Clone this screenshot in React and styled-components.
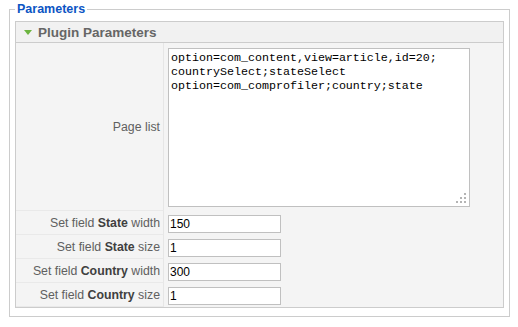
import React from "react";
import styled, { createGlobalStyle } from "styled-components";

const GlobalStyle = createGlobalStyle`
  body {
    margin: 0;
    background: #fff;
    font-family: "Liberation Sans", Arial, sans-serif;
  }
`;

const params = [
  { pre: "Set field ", key: "State", post: " width", value: "150" },
  { pre: "Set field ", key: "State", post: " size", value: "1" },
  { pre: "Set field ", key: "Country", post: " width", value: "300" },
  { pre: "Set field ", key: "Country", post: " size", value: "1" },
];

const pageList =
  "option=com_content,view=article,id=20;\ncountrySelect;stateSelect\noption=com_comprofiler;country;state";

const Page = styled.div`
  padding: 2px 8px 0 9px;
`;

const FieldSet = styled.fieldset`
  box-sizing: border-box;
  width: 501px;
  margin: 0;
  padding: 4px 5px 8px 5px;
  border: 1px solid #cccccc;
`;

const Legend = styled.legend`
  padding: 0 2px;
  font-size: 12.5px;
  line-height: 15px;
  font-weight: bold;
  color: #0b55c4;
`;

const Panel = styled.div`
  border: 1px solid #cccccc;
  background: #f4f4f4;
`;

const PanelHeader = styled.div`
  display: flex;
  align-items: center;
  gap: 6px;
  height: 20px;
  padding-left: 8px;
  background: #f1f1f1;
  border-bottom: 1px solid #cccccc;
  font-size: 13.5px;
  font-weight: bold;
  color: #666666;
`;

const ParamRow = styled.div`
  display: flex;
`;

const Label = styled.div`
  box-sizing: border-box;
  display: flex;
  align-items: center;
  justify-content: flex-end;
  width: 148px;
  padding-right: 3px;
  background: #f4f4f4;
  border-right: 1px solid #e6e6e6;
  border-bottom: 1px solid #e9e9e9;
  font-size: 12.3px;
  color: #606060;
  white-space: nowrap;

  strong {
    color: #404040;
  }
`;

const Value = styled.div`
  flex: 1;
  padding: ${(p) => (p.$tall ? "5px 4px 3px" : "4px 4px 1px")};
  border-bottom: 1px solid #f4f4f4;
`;

const TextareaWrap = styled.div`
  position: relative;
  width: 302px;
  height: 159px;
`;

const PageListArea = styled.textarea`
  box-sizing: border-box;
  display: block;
  width: 302px;
  height: 159px;
  margin: 0;
  padding: 2px;
  border: 1px solid #c0c0c0;
  background: #fff;
  resize: none;
  font-family: "Liberation Mono", "Courier New", monospace;
  font-size: 11.67px;
  line-height: 14px;
  color: #000;
  outline: none;
`;

const Grip = styled.svg`
  position: absolute;
  right: 3px;
  bottom: 3px;
`;

const TextInput = styled.input`
  box-sizing: border-box;
  display: block;
  width: 113px;
  height: 18px;
  margin: 0;
  padding: 0 1px;
  border: 1px solid #c0c0c0;
  background: #fff;
  font-family: "Liberation Sans", Arial, sans-serif;
  font-size: 12px;
  color: #000;
  outline: none;
`;

const ResizeGrip = () => (
  <Grip width="11" height="11" viewBox="0 0 11 11">
    <g fill="#b4b4b4">
      <rect x="8" y="0" width="2" height="2" />
      <rect x="4" y="4" width="2" height="2" />
      <rect x="8" y="4" width="2" height="2" />
      <rect x="0" y="8" width="2" height="2" />
      <rect x="4" y="8" width="2" height="2" />
      <rect x="8" y="8" width="2" height="2" />
    </g>
  </Grip>
);

export default function App() {
  return (
    <Page>
      <GlobalStyle />
      <FieldSet>
        <Legend>Parameters</Legend>
        <Panel>
          <PanelHeader>
            <svg width="8" height="5" viewBox="0 0 8 5">
              <polygon points="0,0 8,0 4,5" fill="#6cb43f" />
            </svg>
            Plugin Parameters
          </PanelHeader>
          <ParamRow>
            <Label>
              <span>Page list</span>
            </Label>
            <Value $tall>
              <TextareaWrap>
                <PageListArea defaultValue={pageList} spellCheck={false} />
                <ResizeGrip />
              </TextareaWrap>
            </Value>
          </ParamRow>
          {params.map((item, idx) => (
            <ParamRow key={idx}>
              <Label>
                <span>
                  {item.pre}
                  <strong>{item.key}</strong>
                  {item.post}
                </span>
              </Label>
              <Value>
                <TextInput defaultValue={item.value} />
              </Value>
            </ParamRow>
          ))}
        </Panel>
      </FieldSet>
    </Page>
  );
}
